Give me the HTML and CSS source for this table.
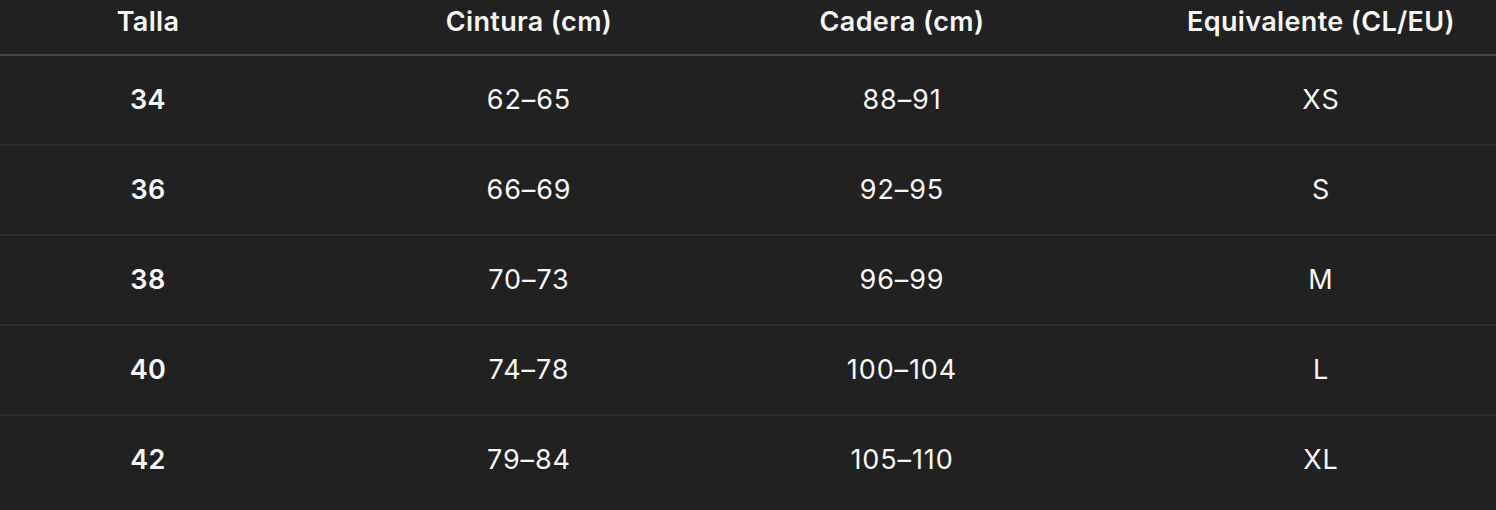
FILE: index.html
```html
<!DOCTYPE html>
<html lang="es">
<head>
<meta charset="utf-8">
<title>Tabla de tallas</title>
<link rel="stylesheet" href="styles.css">
</head>
<body>
<div class="wrap">
  <table class="sizes">
    <colgroup>
      <col class="c1"><col class="c2"><col class="c3"><col class="c4">
    </colgroup>
    <thead>
      <tr><th>Talla</th><th>Cintura (cm)</th><th>Cadera (cm)</th><th>Equivalente (CL/EU)</th></tr>
    </thead>
    <tbody>
      <tr><td class="size">34</td><td>62–65</td><td>88–91</td><td>XS</td></tr>
      <tr><td class="size">36</td><td>66–69</td><td>92–95</td><td>S</td></tr>
      <tr><td class="size">38</td><td>70–73</td><td>96–99</td><td>M</td></tr>
      <tr><td class="size">40</td><td>74–78</td><td>100–104</td><td>L</td></tr>
      <tr><td class="size">42</td><td>79–84</td><td>105–110</td><td>XL</td></tr>
    </tbody>
  </table>
</div>
</body>
</html>
```
FILE: styles.css
```css
html, body {
  margin: 0;
  padding: 0;
  background: #212121;
}
body {
  font-family: Inter, "Noto Sans", "Liberation Sans", sans-serif;
  color: #f7f7f7;
}
.wrap {
  width: 1496px;
  height: 510px;
  overflow: hidden;
}
.sizes {
  width: 1600px;
  table-layout: fixed;
  border-collapse: collapse;
  border-spacing: 0;
}
.c1 { width: 296px; }
.c2 { width: 466px; }
.c3 { width: 280px; }
.c4 { width: 558px; }
.sizes th {
  font-size: 27px;
  font-weight: 600;
  letter-spacing: 0.35px;
  line-height: 32px;
  padding: 6px 0 16px;
  text-align: center;
  border-bottom: 2px solid #454545;
}
.sizes td {
  font-size: 27px;
  font-weight: 400;
  letter-spacing: 0.9px;
  line-height: 32px;
  padding: 28px 0;
  text-align: center;
  border-bottom: 2px solid #2d2d2d;
}
.sizes tbody tr:last-child td {
  border-bottom: none;
}
.sizes td.size {
  font-weight: 600;
  letter-spacing: 0.4px;
}
```
